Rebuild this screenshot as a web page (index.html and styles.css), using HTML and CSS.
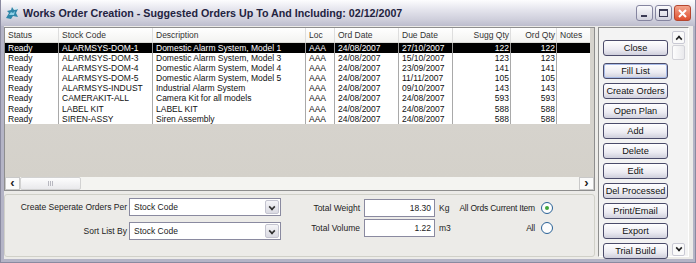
FILE: index.html
```html
<!DOCTYPE html>
<html lang="en">
<head>
    <meta charset="UTF-8">
    <title>Works Order Creation</title>
    <link rel="stylesheet" href="styles.css">
</head>
<body>
<div class="window">
    <!-- Заголовок окна -->
    <div class="titlebar">
        <svg class="app-icon" width="16" height="16" viewBox="0 0 16 16">
            <path d="M2 13 L5 8 L3 6 L7 5 L8 2 L10 5 L14 4 L12 8 L14 12 L9 11 L7 14 Z" fill="#2f86a8"/>
            <path d="M5 10 L7 7 L9 8 L11 6 L10 10 Z" fill="#8fd0e6"/>
            <circle cx="12" cy="3" r="1.6" fill="#d9eef6"/>
        </svg>
        <span class="title">Works Order Creation - Suggested Orders Up To And Including: 02/12/2007</span>
        <div class="caption-btns">
            <span class="cap-btn"><span class="min-glyph"></span></span>
            <span class="cap-btn"><span class="max-glyph"></span></span>
            <span class="cap-btn close">
                <svg width="11" height="11" viewBox="0 0 11 11"><path d="M2 2 L9 9 M9 2 L2 9" stroke="#fff" stroke-width="2"/></svg>
            </span>
        </div>
    </div>

    <div class="client">
        <div class="main">
            <!-- Список заказов -->
            <div class="grid">
                <div class="list-row list-head">
                    <span>Status</span><span>Stock Code</span><span>Description</span><span>Loc</span>
                    <span>Ord Date</span><span>Due Date</span><span class="num">Sugg Qty</span>
                    <span class="num">Ord Qty</span><span>Notes</span>
                </div>
                <div id="rows" class="list-body"></div>
                <div class="list-empty"></div>
                <div class="hscroll">
                    <span class="sb-btn">&lsaquo;</span>
                    <span class="sb-thumb"><span class="grip"></span></span>
                    <span class="sb-track"></span>
                    <span class="sb-btn">&rsaquo;</span>
                </div>
            </div>

            <!-- Параметры -->
            <div class="options">
                <div class="opt-left">
                    <label>Create Seperate Orders Per</label>
                    <div class="combo"><span>Stock Code</span><span class="drop"></span></div>
                    <label>Sort List By</label>
                    <div class="combo"><span>Stock Code</span><span class="drop"></span></div>
                </div>
                <div class="opt-right">
                    <label>Total Weight</label>
                    <div class="field">18.30</div>
                    <span class="unit">Kg</span>
                    <span class="radio-label">All Ords Current Item</span>
                    <span class="radio checked"></span>
                    <label>Total Volume</label>
                    <div class="field">1.22</div>
                    <span class="unit">m3</span>
                    <span class="radio-label">All</span>
                    <span class="radio"></span>
                </div>
            </div>
        </div>

        <!-- Панель кнопок -->
        <div class="side">
            <div class="buttons">
                <button class="close-btn">Close</button>
                <button class="focused">Fill List</button>
                <button>Create Orders</button>
                <button>Open Plan</button>
                <button>Add</button>
                <button>Delete</button>
                <button>Edit</button>
                <button>Del Processed</button>
                <button>Print/Email</button>
                <button>Export</button>
                <button>Trial Build</button>
            </div>
            <div class="vscroll">
                <span class="vs-btn up"></span>
                <span class="vs-thumb"></span>
                <span class="vs-track"></span>
                <span class="vs-btn down"></span>
            </div>
        </div>
    </div>
</div>

<script>
    const orders = [
        ['Ready', 'ALARMSYS-DOM-1', 'Domestic Alarm System, Model 1', 'AAA', '24/08/2007', '27/10/2007', 122, 122],
        ['Ready', 'ALARMSYS-DOM-3', 'Domestic Alarm System, Model 3', 'AAA', '24/08/2007', '15/10/2007', 123, 123],
        ['Ready', 'ALARMSYS-DOM-4', 'Domestic Alarm System, Model 4', 'AAA', '24/08/2007', '23/09/2007', 141, 141],
        ['Ready', 'ALARMSYS-DOM-5', 'Domestic Alarm System, Model 5', 'AAA', '24/08/2007', '11/11/2007', 105, 105],
        ['Ready', 'ALARMSYS-INDUST', 'Industrial Alarm System', 'AAA', '24/08/2007', '09/10/2007', 143, 143],
        ['Ready', 'CAMERAKIT-ALL', 'Camera Kit for all models', 'AAA', '24/08/2007', '24/08/2007', 593, 593],
        ['Ready', 'LABEL KIT', 'LABEL KIT', 'AAA', '24/08/2007', '24/08/2007', 588, 588],
        ['Ready', 'SIREN-ASSY', 'Siren Assembly', 'AAA', '24/08/2007', '24/08/2007', 588, 588]
    ];

    const container = document.getElementById('rows');
    orders.forEach((o, i) => {
        const row = document.createElement('div');
        row.className = i === 0 ? 'list-row selected' : 'list-row';
        o.forEach((v, j) => {
            const cell = document.createElement('span');
            cell.innerText = v;
            if (j >= 6) cell.className = 'num';
            row.appendChild(cell);
        });
        row.appendChild(document.createElement('span'));
        container.appendChild(row);
    });
</script>
</body>
</html>
```

FILE: styles.css
```css
/* Окно в стиле Windows XP (серебристая тема) */
body {
    margin: 0;
    font-family: 'Liberation Sans', Arial, sans-serif;
    font-size: 8.5px;
    color: #000;
    background: #fff;
}

.window {
    width: 696px;
    height: 263px;
    box-sizing: border-box;
    background: #b4b4c6;
    border: 1px solid #8a8aa0;
    border-top: none;
    display: flex;
    flex-direction: column;
    overflow: hidden;
}

/* Заголовок */
.titlebar {
    height: 26px;
    flex: none;
    display: flex;
    align-items: center;
    padding: 0 3px 0 3px;
    background: linear-gradient(#fdfdfe 0%, #e6e6ee 35%, #cfcfdc 75%, #bdbdcd 100%);
}

.app-icon {
    flex: none;
    margin-right: 3px;
}

.title {
    font-weight: bold;
    font-size: 10.7px;
    color: #232340;
    white-space: nowrap;
    flex: 1;
}

.caption-btns {
    display: flex;
    gap: 2px;
    margin-right: 1px;
}

.cap-btn {
    width: 17px;
    height: 16px;
    box-sizing: border-box;
    border: 1px solid #8585a0;
    border-radius: 3px;
    background: linear-gradient(#fbfbfd, #d2d2de);
    position: relative;
}

.cap-btn.close {
    background: linear-gradient(#f3a58e, #df4f2e);
    border-color: #b4462f;
    display: flex;
    align-items: center;
    justify-content: center;
}

.min-glyph {
    position: absolute;
    left: 4px;
    bottom: 3px;
    width: 6px;
    height: 2px;
    background: #3b3b55;
}

.max-glyph {
    position: absolute;
    left: 3px;
    top: 3px;
    width: 9px;
    height: 8px;
    box-sizing: border-box;
    border: 1px solid #3b3b55;
    border-top-width: 2px;
}

/* Клиентская область */
.client {
    flex: 1;
    display: flex;
    gap: 3px;
    background: #ecebe8;
    margin: 0 2px 3px 3px;
    padding: 1px 1px 0 0;
    min-height: 0;
}

.main {
    width: 591px;
    display: flex;
    flex-direction: column;
    gap: 3px;
}

/* Список */
.grid {
    height: 164px;
    flex: none;
    box-sizing: border-box;
    border: 1px solid #8e8e8e;
    background-color: #d6d3cd;
    display: flex;
    flex-direction: column;
}

.list-body {
    flex: none;
    width: 585px;
}

.list-row {
    display: grid;
    grid-template-columns: 54px 94px 153px 29px 64px 54px 58px 46px 33px;
    height: 10.1px;
    line-height: 10px;
    width: 585px;
    background: #fff;
    color: #111;
    overflow: hidden;
}

.list-row span {
    padding: 0 1px 0 3px;
    border-right: 1px solid #a9a9a9;
    white-space: nowrap;
    overflow: hidden;
}

.list-row span:last-child {
    border-right: none;
}

.list-row .num {
    text-align: right;
    padding-right: 1px;
}

.list-head {
    flex: none;
    height: 15px;
    line-height: 14px;
    box-sizing: border-box;
    color: #333;
    background: linear-gradient(#ffffff, #f3f3f1);
    border-bottom: 1px solid #dcdcd8;
}

.list-head span {
    border-right-color: #dedede;
}

.list-row.selected {
    background: #000;
    color: #fff;
}

.list-row.selected span {
    border-right-color: #9a9a9a;
}

.list-empty {
    flex: 1;
    background-color: #d6d3cd;
    background-image: linear-gradient(#d6d3cd, #d4d1ca);
}

/* Горизонтальная прокрутка */
.hscroll {
    flex: none;
    height: 13px;
    display: flex;
    background: #f4f4f1;
}

.sb-btn {
    width: 15px;
    flex: none;
    box-sizing: border-box;
    border: 1px solid #c9c9c9;
    background: #fbfbfb;
    font-size: 13px;
    font-weight: bold;
    line-height: 9px;
    text-align: center;
    color: #222;
}

.sb-thumb {
    width: 61px;
    flex: none;
    box-sizing: border-box;
    border: 1px solid #d2d2d2;
    border-radius: 2px;
    background: linear-gradient(#fdfdfd, #e9e9ec);
    display: flex;
    align-items: center;
    justify-content: center;
}

.grip {
    width: 5px;
    height: 5px;
    background: repeating-linear-gradient(90deg, #b8b8c0 0 1px, transparent 1px 2px);
}

.sb-track {
    flex: 1;
}

/* Группа параметров */
.options {
    height: 63px;
    box-sizing: border-box;
    border: 1px solid #d0d0c8;
    border-radius: 3px;
    display: flex;
    padding-top: 3px;
    color: #222;
}

.opt-left {
    display: grid;
    grid-template-columns: 122px 152px;
    grid-auto-rows: 18px;
    column-gap: 2px;
    row-gap: 6px;
    align-items: center;
}

.opt-left label {
    text-align: right;
}

.combo {
    height: 18px;
    box-sizing: border-box;
    border: 1px solid #8a8aa0;
    background: #fff;
    display: flex;
    align-items: center;
    padding-left: 4px;
}

.combo span:first-child {
    flex: 1;
}

.drop {
    width: 14px;
    height: 14px;
    margin-right: 1px;
    box-sizing: border-box;
    border: 1px solid #c4c4d0;
    border-radius: 2px;
    background: linear-gradient(#f5f5f8, #dadae2);
    position: relative;
}

.drop::after {
    content: '';
    position: absolute;
    left: 3px;
    top: 3px;
    width: 4px;
    height: 4px;
    border-right: 2px solid #333;
    border-bottom: 2px solid #333;
    transform: scale(0.8) rotate(45deg);
}

.opt-right {
    margin-left: 25px;
    margin-top: 1px;
    display: grid;
    grid-template-columns: 54px 71px 16px 78px 12px;
    grid-auto-rows: 18px;
    column-gap: 4px;
    row-gap: 2px;
    align-items: center;
}

.opt-right label {
    text-align: right;
}

.field {
    height: 18px;
    box-sizing: border-box;
    border: 1px solid #8a8aa0;
    background: #fff;
    text-align: right;
    padding-right: 3px;
    line-height: 16px;
}

.radio-label {
    text-align: right;
    white-space: nowrap;
    letter-spacing: -0.2px;
    margin-right: 2px;
}

.radio {
    width: 12px;
    height: 12px;
    box-sizing: border-box;
    border: 1px solid #2a6296;
    border-radius: 50%;
    background: #fdfdfd;
    position: relative;
}

.radio.checked::after {
    content: '';
    position: absolute;
    left: 3px;
    top: 3px;
    width: 4px;
    height: 4px;
    border-radius: 50%;
    background: #3ea63a;
}

/* Правая панель с кнопками */
.side {
    width: 91px;
    box-sizing: border-box;
    border: 1px solid #8e8e8e;
    border-right-color: #fff;
    border-bottom-color: #fff;
    background: #f3f3f3;
    display: flex;
    padding: 3px 2px 0 4px;
    margin-bottom: 2px;
}

.buttons {
    width: 65px;
    display: flex;
    flex-direction: column;
    gap: 4px;
    padding-top: 9px;
}

.buttons button {
    height: 16px;
    flex: none;
    padding: 0;
    font-family: 'Liberation Sans', Arial, sans-serif;
    font-size: 9.2px;
    color: #111;
    border: 1px solid #4b4b6a;
    border-radius: 3px;
    background: linear-gradient(#ffffff, #ecebf2 60%, #cfcfdc);
    white-space: nowrap;
}

.buttons .close-btn {
    margin-bottom: 3px;
}

.buttons .focused {
    box-shadow: inset 0 0 0 1px #a9bce8;
}

.vscroll {
    width: 13px;
    margin-left: 4px;
    display: flex;
    flex-direction: column;
}

.vs-btn {
    height: 13px;
    flex: none;
    box-sizing: border-box;
    border: 1px solid #c9c9d4;
    border-radius: 2px;
    background: #fafafa;
    position: relative;
}

.vs-btn::after {
    content: '';
    position: absolute;
    left: 3px;
    width: 4px;
    height: 4px;
    border-left: 2px solid #222;
    border-top: 2px solid #222;
    transform: scale(0.8) rotate(45deg);
}

.vs-btn.up::after {
    top: 4px;
}

.vs-btn.down::after {
    top: 1px;
    transform: scale(0.8) rotate(225deg);
}

.vs-thumb {
    height: 15px;
    margin-top: 1px;
    box-sizing: border-box;
    border: 1px solid #d2d2d8;
    border-radius: 2px;
    background: linear-gradient(90deg, #fdfdfd, #e9e9ec);
}

.vs-track {
    flex: 1;
}
```
